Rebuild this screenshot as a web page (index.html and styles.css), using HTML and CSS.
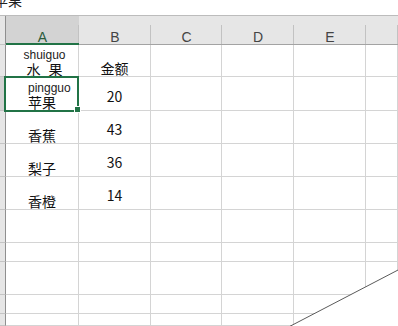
FILE: index.html
```html
<!DOCTYPE html>
<html lang="zh">
<head>
<meta charset="utf-8">
<link rel="stylesheet" href="styles.css">
</head>
<body>
<div class="top"><span class="top-text">苹果</span></div>
<div class="sheet">
  <div class="rh"></div>
  <div class="ch sel">A</div>
  <div class="ch">B</div>
  <div class="ch">C</div>
  <div class="ch">D</div>
  <div class="ch">E</div>
  <div class="ch"></div>

  <div class="rh"></div>
  <div class="c txt a1"><span class="py">shuiguo</span><span class="zh gap">水 果</span></div>
  <div class="c txt center"><span class="zh">金额</span></div>
  <div class="c"></div><div class="c"></div><div class="c"></div><div class="c"></div>

  <div class="rh rsel"></div>
  <div class="c txt a2 selected"><span class="py">pingguo</span><span class="zh">苹果</span></div>
  <div class="c num">20</div>
  <div class="c"></div><div class="c"></div><div class="c"></div><div class="c"></div>

  <div class="rh"></div>
  <div class="c txt center"><span class="zh">香蕉</span></div>
  <div class="c num">43</div>
  <div class="c"></div><div class="c"></div><div class="c"></div><div class="c"></div>

  <div class="rh"></div>
  <div class="c txt center"><span class="zh">梨子</span></div>
  <div class="c num">36</div>
  <div class="c"></div><div class="c"></div><div class="c"></div><div class="c"></div>

  <div class="rh"></div>
  <div class="c txt center"><span class="zh">香橙</span></div>
  <div class="c num">14</div>
  <div class="c"></div><div class="c"></div><div class="c"></div><div class="c"></div>

  <div class="rh"></div>
  <div class="c"></div><div class="c"></div><div class="c"></div><div class="c"></div><div class="c"></div><div class="c"></div>
  <div class="rh"></div>
  <div class="c"></div><div class="c"></div><div class="c"></div><div class="c"></div><div class="c"></div><div class="c"></div>
  <div class="rh"></div>
  <div class="c"></div><div class="c"></div><div class="c"></div><div class="c"></div><div class="c"></div><div class="c"></div>
  <div class="rh"></div>
  <div class="c"></div><div class="c"></div><div class="c"></div><div class="c"></div><div class="c"></div><div class="c"></div>
  <div class="rh"></div>
  <div class="c"></div><div class="c"></div><div class="c"></div><div class="c"></div><div class="c"></div><div class="c"></div>
</div>
<svg class="shape" width="398" height="326" viewBox="0 0 398 326">
  <polygon points="290,326.5 399,269.5 399,327" fill="#ffffff"/>
  <line x1="289.5" y1="326.5" x2="399" y2="269.5" stroke="#5a5a5a" stroke-width="1"/>
</svg>
</body>
</html>
```

FILE: styles.css
```css
html, body {
  margin: 0;
  padding: 0;
}
body {
  width: 398px;
  height: 326px;
  overflow: hidden;
  background: #ffffff;
  position: relative;
  font-family: "Noto Sans CJK SC", sans-serif;
  color: #111111;
}
.top {
  height: 15px;
  overflow: hidden;
}
.top-text {
  display: block;
  margin-top: -7px;
  margin-left: -6px;
  font-size: 14px;
  line-height: 14px;
  color: #222222;
}
.sheet {
  display: grid;
  grid-template-columns: 6px 73px 72px 71px 72px 72px 1fr;
  grid-template-rows: 29px 32px 34px 33px 33px 33px 33px 19px 33px 19px 12px;
  border-top: 1px solid #bcbcbc;
}
.sheet > div {
  box-sizing: border-box;
  min-width: 0;
}
.c {
  border-right: 1px solid #d4d4d4;
  border-bottom: 1px solid #d4d4d4;
}
.rh {
  background: #e6e6e6;
  border-right: 1px solid #8f8f8f;
  border-bottom: 1px solid #c4c4c4;
}
.rh.rsel {
  background: #d2d2d2;
}
.ch {
  background: linear-gradient(#c2c2c2, #c2c2c2) right 9px / 1px 100% no-repeat, #e6e6e6;
  border-bottom: 1px solid #a3a3a3;
  text-align: center;
  padding-top: 14px;
  font-family: "Liberation Sans", sans-serif;
  font-size: 14px;
  line-height: 14px;
  color: #444444;
}
.ch.sel {
  background-color: #d3d3d3;
  border-bottom: 2px solid #217346;
  color: #2c5b3c;
}
.txt {
  display: flex;
  flex-direction: column;
  justify-content: flex-end;
  padding-bottom: 1px;
}
.txt.center {
  align-items: center;
}
.zh {
  font-size: 14px;
  line-height: 14px;
  white-space: pre;
}
.zh.gap {
  word-spacing: 5px;
}
.py {
  font-family: "Liberation Sans", sans-serif;
  font-size: 12px;
  line-height: 14px;
  color: #222222;
}
.a1 {
  align-items: center;
  padding-left: 5px;
  padding-bottom: 0;
}
.a2 {
  align-items: flex-start;
  padding-left: 22px;
}
.selected {
  position: relative;
}
.selected::after {
  content: "";
  position: absolute;
  top: -1px;
  left: -2px;
  right: -1px;
  bottom: -2px;
  border: 2px solid #217346;
}
.selected::before {
  content: "";
  position: absolute;
  right: -3px;
  bottom: -3px;
  width: 5px;
  height: 5px;
  background: #217346;
  border: 1px solid #ffffff;
  z-index: 2;
}
.num {
  display: flex;
  justify-content: center;
  align-items: center;
  padding-top: 4px;
  font-size: 14px;
  line-height: 16px;
}
.shape {
  position: absolute;
  left: 0;
  top: 0;
  pointer-events: none;
}
```
